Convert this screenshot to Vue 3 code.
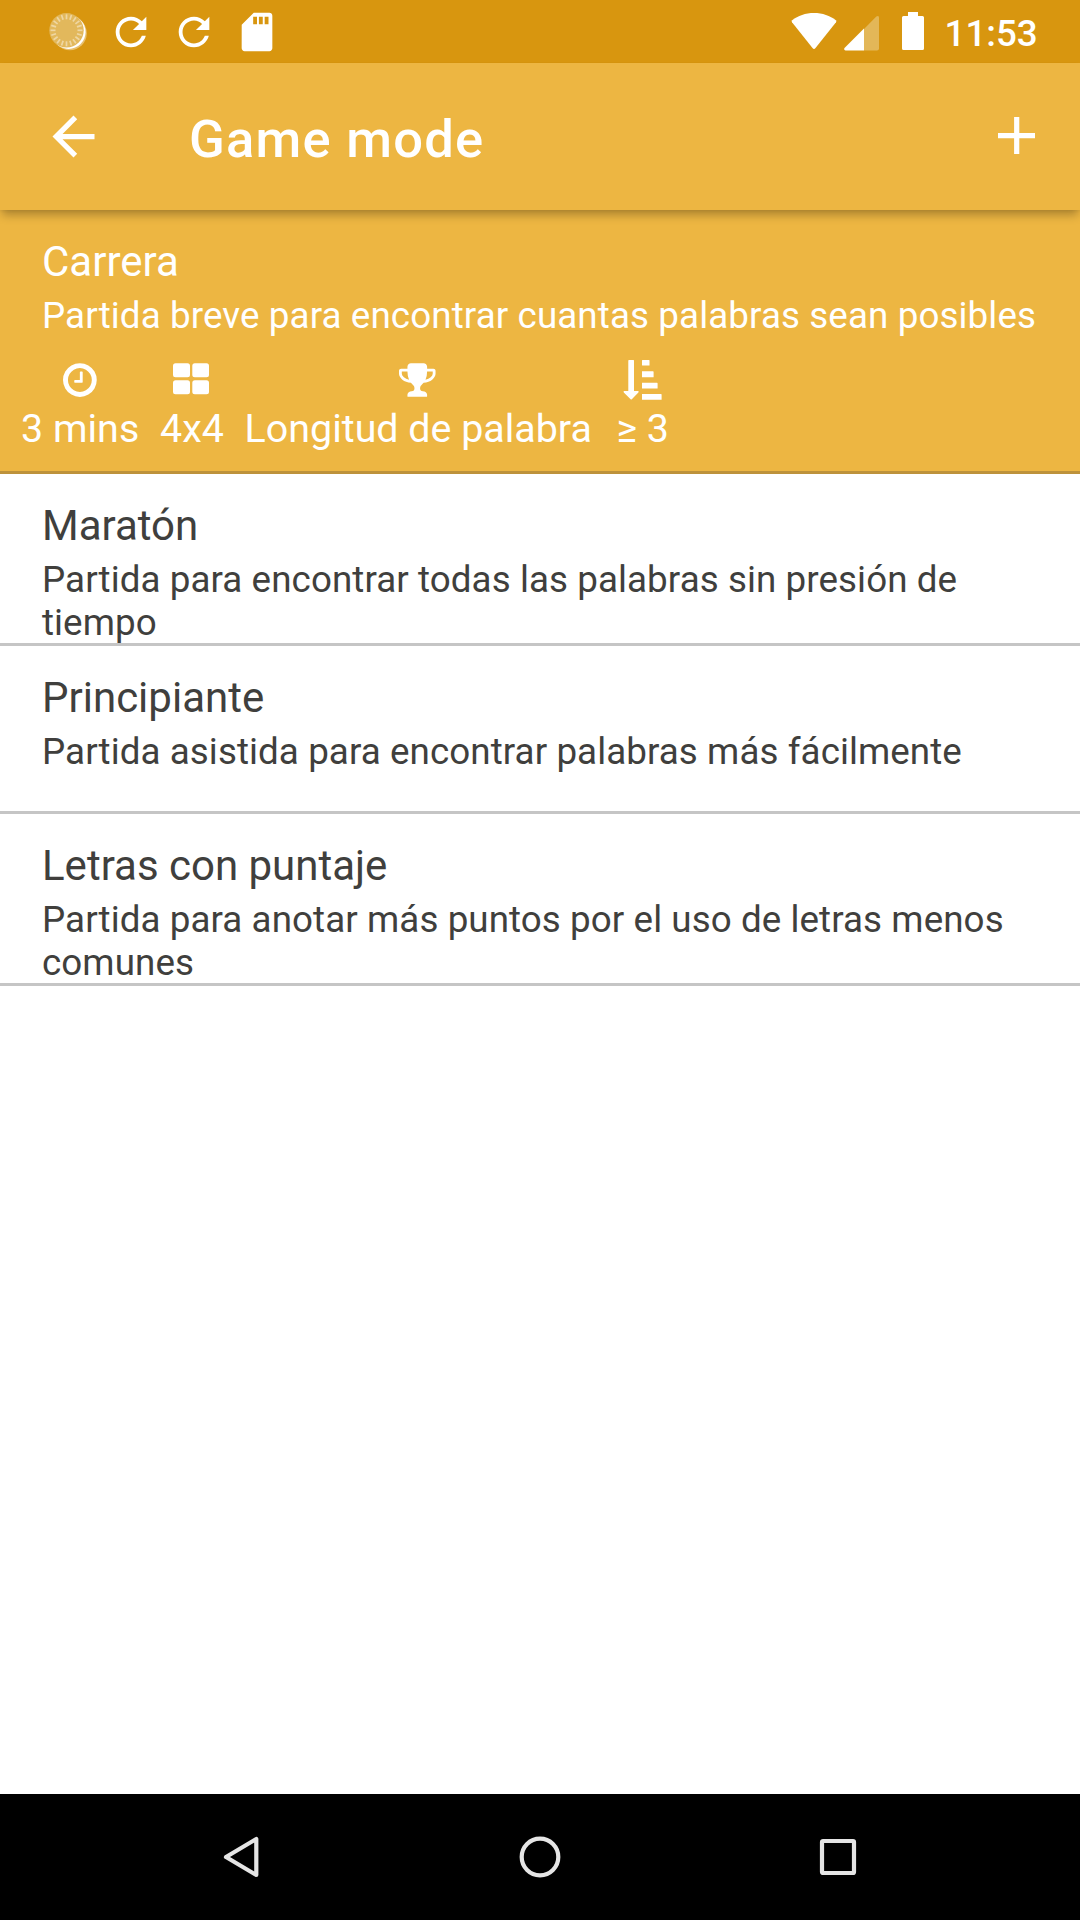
<script setup>
const modes = [
  {
    name: 'Carrera',
    text: 'Partida breve para encontrar cuantas palabras sean posibles',
    kind: 'selected'
  },
  { name: 'Maratón', text: 'Partida para encontrar todas las palabras sin presión de tiempo', kind: 'tall' },
  { name: 'Principiante', text: 'Partida asistida para encontrar palabras más fácilmente', kind: 'short' },
  { name: 'Letras con puntaje', text: 'Partida para anotar más puntos por el uso de letras menos comunes', kind: 'tall' }
]
const ticks = Array.from({ length: 20 }, (_, i) => i * 18)
</script>

<template>
  <div class="screen">
    <div class="status">
      <svg class="spinner" width="40" height="40" viewBox="0 0 40 40">
        <circle cx="21.8" cy="21.3" r="17" fill="#fff" opacity=".4" />
        <circle cx="20.6" cy="19.900" r="17" fill="#fff" />
        <circle cx="18.5" cy="18.3" r="17.2" fill="#e2b85c" />
        <g stroke="#efd7a3" stroke-width="1.7">
          <line v-for="t in ticks" :key="t" x1="18.5" y1="2.3" x2="18.5" y2="7.3" :transform="`rotate(${t} 18.5 18.3)`" />
        </g>
      </svg>
      <svg v-for="n in 2" :key="n" class="refresh" width="46" height="46" viewBox="0 0 24 24">
        <path fill="#fff" d="M17.65 6.35C16.2 4.9 14.21 4 12 4c-4.42 0-7.99 3.58-7.99 8s3.57 8 7.99 8c3.73 0 6.84-2.55 7.73-6h-2.08c-.82 2.33-3.04 4-5.65 4-3.31 0-6-2.69-6-6s2.69-6 6-6c1.66 0 3.14.69 4.22 1.78L13 11h7V4l-2.35 2.35z" />
      </svg>
      <svg class="sd" width="46" height="46" viewBox="0 0 24 24">
        <path fill="#fff" d="M18.5 2h-8.2L4.02 8.2 4 20.5c0 .8.7 1.5 1.5 1.5h13c.8 0 1.5-.7 1.5-1.5v-17c0-.8-.7-1.5-1.5-1.5zm-6.5 6h-2V4h2v4zm3 0h-2V4h2v4zm3 0h-2V4h2v4z" />
      </svg>
      <div class="grow"></div>
      <svg class="wifi" width="46" height="38" viewBox="0 0 46 38">
        <path fill="#fff" d="M23 1C14.500 1 7 3.700 1.200 8.200Q.200 9.200 1 10.300L21.500 36Q23 37.800 24.500 36L45 10.300Q45.800 9.200 44.800 8.200C39 3.700 31.500 1 23 1z" />
      </svg>
      <svg class="signal" width="35" height="36" viewBox="0 0 35 36">
        <path fill="#e3b758" d="M20 14 32.300 1.500Q35 0 35 2.500V33.500Q35 35.500 33 35.500H20z" />
        <path fill="#fff" d="M20 13.500V35.500H1.500Q-.5 35 .5 33z" />
      </svg>
      <svg class="battery" width="22" height="38" viewBox="0 0 22 38">
        <path fill="#fff" d="M6 0H16V4H20.500Q22 4 22 5.500V36.500Q22 38 20.500 38H1.500Q0 38 0 36.500V5.500Q0 4 1.500 4H6z" />
      </svg>
      <span class="clock">11:53</span>
    </div>

    <header class="bar">
      <svg class="back" width="63" height="63" viewBox="0 0 24 24">
        <path fill="#fff" d="M20 11H7.830l5.590-5.590L12 4l-8 8 8 8 1.410-1.410L7.830 13H20v-2z" />
      </svg>
      <h1>Game mode</h1>
      <svg class="plus" width="37" height="37" viewBox="0 0 37 37">
        <path stroke="#fff" stroke-width="5.200" d="M0 18.700H37M18.700 0V37" />
      </svg>
    </header>

    <main>
      <section v-for="m in modes" :key="m.name" :class="['mode', m.kind]">
        <h2>{{ m.name }}</h2>
        <p>{{ m.text }}</p>
        <div v-if="m.kind === 'selected'" class="facts">
          <div class="fact">
            <svg width="33.750" height="39.400" viewBox="0 0 1536 1792">
              <path fill="#fff" d="M896 544v448q0 14-9 23t-23 9h-320q-14 0-23-9t-9-23v-64q0-14 9-23t23-9h224v-352q0-14 9-23t23-9h64q14 0 23 9t9 23zm416 352q0-148-73-273t-198-198-273-73-273 73-198 198-73 273 73 273 198 198 273 73 273-73 198-198 73-273zm224 0q0 209-103 385.500t-279.500 279.500-385.500 103-385.500-103-279.500-279.500-103-385.500 103-385.500 279.500-279.500 385.500-103 385.500 103 279.500 279.500 103 385.500z" />
            </svg>
            <span>3 mins</span>
          </div>
          <div class="fact">
            <svg width="36" height="39.400" viewBox="0 0 36 39.400">
              <g fill="#fff">
                <rect x="0" y="3" width="17" height="14" rx="2.500" />
                <rect x="19.300" y="3" width="16.700" height="14" rx="2.500" />
                <rect x="0" y="20" width="17" height="14" rx="2.500" />
                <rect x="19.300" y="20" width="16.700" height="14" rx="2.500" />
              </g>
            </svg>
            <span>4x4</span>
          </div>
          <div class="fact">
            <svg width="36.560" height="39.400" viewBox="0 0 1664 1792">
              <path fill="#fff" d="M458 883q-74-162-74-371h-256v96q0 78 94.500 162t235.500 113zm1078-275v-96h-256q0 209-74 371 141-29 235.500-113t94.500-162zm128-128v128q0 71-41.500 143t-112 130-173 97.500-215.500 44.500q-42 54-95 95-38 34-52.500 72.500t-14.500 89.500q0 54 30.500 91t97.500 37q75 0 133.500 45.500t58.500 114.500v64q0 14-9 23t-23 9h-832q-14 0-23-9t-9-23v-64q0-69 58.500-114.500t133.500-45.500q67 0 97.500-37t30.500-91q0-51-14.500-89.500t-52.500-72.500q-53-41-95-95-113-5-215.500-44.500t-173-97.500-112-130-41.500-143v-128q0-40 28-68t68-28h288v-96q0-66 47-113t113-47h576q66 0 113 47t47 113v96h288q40 0 68 28t28 68z" />
            </svg>
            <span>Longitud de palabra</span>
          </div>
          <div class="fact">
            <svg width="39" height="40" viewBox="0 0 39 40">
              <path fill="#fff" d="M6 0H10.400Q11 0 11 .600V31H15Q16.300 31.300 15.400 32.400L8.800 39.200Q8.200 39.800 7.600 39.200L.800 32.400Q0 31.300 1.200 31H5.300V.600Q5.300 0 6 0zM19.600 0H26Q26.500 0 26.500 .600V5.500H19.600Q19 5.500 19 5V.600Q19 0 19.600 0zM19 11.300H30Q30.600 11.300 30.600 11.900V17.200H19zM19 22.800H34Q34.600 22.800 34.600 23.400V28.500H19zM19 34H38Q38.600 34 38.600 34.600V39.800H19z" />
            </svg>
            <span>≥ 3</span>
          </div>
        </div>
      </section>
    </main>

    <nav class="nav">
      <svg width="44" height="44" viewBox="0 0 44 44"><path d="M6 22 36.300 4V40z" /></svg>
      <svg width="44" height="44" viewBox="0 0 44 44"><circle cx="22" cy="22" r="18.300" /></svg>
      <svg width="44" height="44" viewBox="0 0 44 44"><rect x="6" y="6" width="32" height="32" rx="1" /></svg>
    </nav>
  </div>
</template>

<style>
body {
  margin: 0;
  background: #fff;
}
</style>

<style scoped>
.screen {
  width: 1080px;
  height: 1920px;
  display: flex;
  flex-direction: column;
  overflow: hidden;
  background: #fff;
  color: #403f3d;
  font-family: Roboto, "Liberation Sans", sans-serif;
}
svg {
  display: block;
  flex: none;
}
.status {
  height: 63px;
  display: flex;
  align-items: flex-start;
  background: #d8960f;
  color: #fff;
}
.spinner { margin: 12px 0 0 48px; }
.refresh { margin: 8.500px 0 0 20.300px; }
.refresh + .refresh { margin-left: 17px; }
.sd { margin: 8.500px 0 0 17px; }
.grow { flex: 1; }
.wifi { margin: 12px 7px 0 0; }
.signal { margin: 14.500px 23px 0 0; }
.battery { margin: 12px 20.500px 0 0; }
.clock {
  width: 135.500px;
  margin-top: 12px;
  font-size: 36.750px;
  line-height: 43px;
  font-weight: 500;
  white-space: nowrap;
}
.bar {
  position: relative;
  height: 147px;
  display: flex;
  align-items: flex-start;
  flex: none;
  background: #edb642;
  color: #fff;
  box-shadow: 0 7px 9px -2px rgba(0, 0, 0, .27), 0 1px 3px rgba(0, 0, 0, .05);
}
.back { margin: 42px 0 0 42px; }
h1 {
  flex: 1;
  margin: 45px 0 0 84px;
  font-size: 52.500px;
  line-height: 62px;
  font-weight: 500;
  letter-spacing: 1.250px;
}
.plus { margin: 54px 45px 0 0; }
.mode {
  box-sizing: border-box;
  padding: 27px 0 0 42px;
  border-bottom: 3px solid #c5c5c5;
}
.selected {
  height: 264px;
  background: #edb642;
  color: #fff;
  border-color: #bd923b;
}
.tall { height: 172px; }
.short { height: 168px; }
h2 {
  margin: 0;
  font-size: 42px;
  line-height: 50px;
  font-weight: 400;
}
p {
  width: 1010px;
  margin: 7px 0 0;
  font-size: 36.750px;
  line-height: 43px;
  letter-spacing: .080px;
}
.selected p { letter-spacing: .110px; }
.facts {
  display: flex;
  margin: 23px 0 0 -31.300px;
}
.fact {
  display: flex;
  flex-direction: column;
  align-items: center;
  padding: 0 10.400px;
  font-size: 39.400px;
  line-height: 46px;
  white-space: nowrap;
}
.fact svg {
  height: 40px;
  margin-right: 1px;
}
.fact span { margin-top: 6px; }
.fact:last-child { padding-left: 14px; }
.fact:last-child svg { margin-right: 0; }
.nav {
  height: 126px;
  margin-top: auto;
  display: flex;
  justify-content: center;
  align-items: center;
  gap: 254px;
  background: #000;
}
.nav svg {
  fill: none;
  stroke: #e5e5e5;
  stroke-width: 4.200;
  stroke-linejoin: round;
}
</style>
